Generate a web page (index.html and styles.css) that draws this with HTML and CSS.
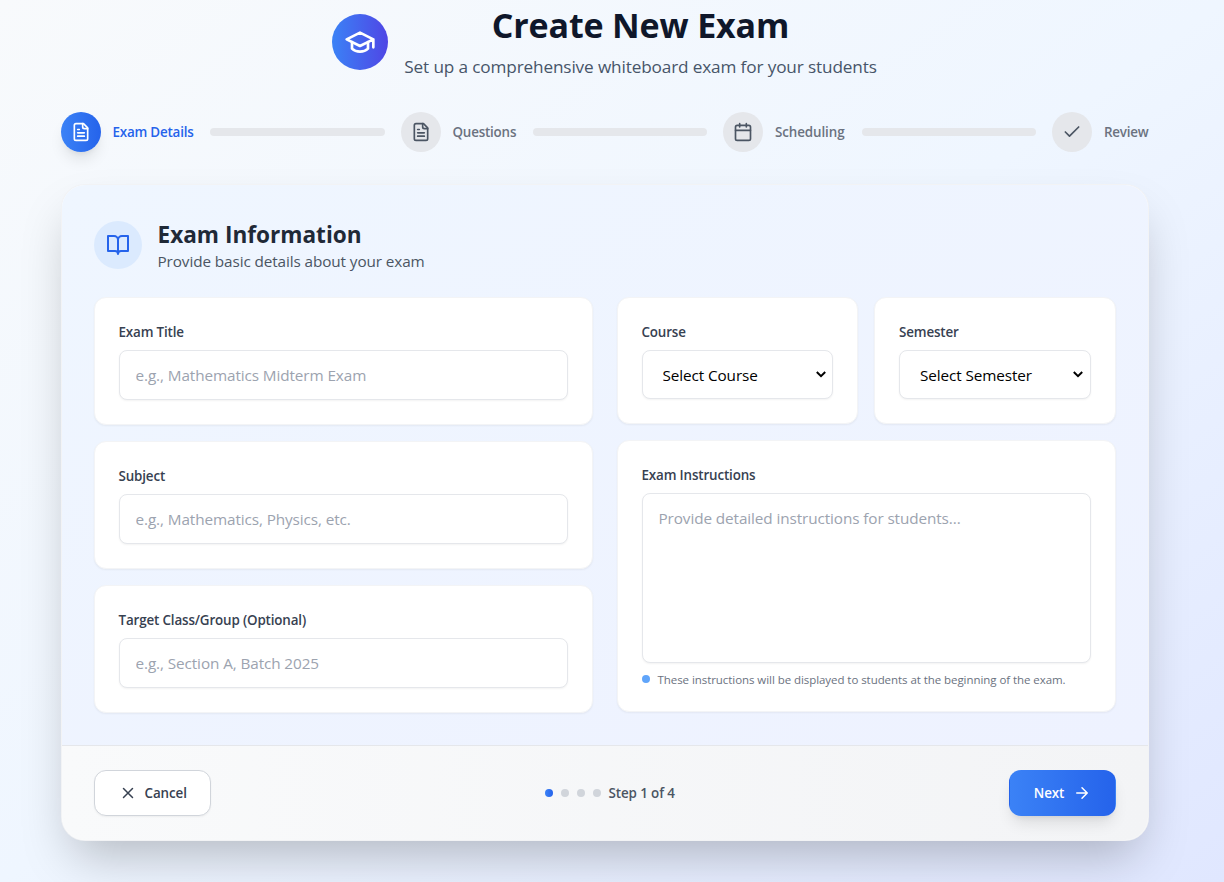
FILE: index.html
```
<!DOCTYPE html>
<html lang="en">
<head>
<meta charset="utf-8">
<title>Create New Exam</title>
<link rel="stylesheet" href="styles.css">
</head>
<body>
<main class="page">
  <header class="hero">
    <div class="hero-icon">
      <svg class="icon i32" viewBox="0 0 24 24"><path d="M22 10v6M2 10l10-5 10 5-10 5z"/><path d="M6 12v5c3 3 9 3 12 0v-5"/></svg>
    </div>
    <div class="hero-text">
      <h1>Create New Exam</h1>
      <p>Set up a comprehensive whiteboard exam for your students</p>
    </div>
  </header>

  <nav class="steps">
    <div class="step active">
      <span class="step-icon"><svg class="icon i20" viewBox="0 0 24 24"><path d="M15 2H6a2 2 0 0 0-2 2v16a2 2 0 0 0 2 2h12a2 2 0 0 0 2-2V7Z"/><path d="M14 2v4a2 2 0 0 0 2 2h4M10 9H8M16 13H8M16 17H8"/></svg></span>
      <span class="step-label w-details">Exam Details</span>
    </div>
    <div class="bar"></div>
    <div class="step">
      <span class="step-icon"><svg class="icon i20" viewBox="0 0 24 24"><path d="M15 2H6a2 2 0 0 0-2 2v16a2 2 0 0 0 2 2h12a2 2 0 0 0 2-2V7Z"/><path d="M14 2v4a2 2 0 0 0 2 2h4M10 9H8M16 13H8M16 17H8"/></svg></span>
      <span class="step-label w-questions">Questions</span>
    </div>
    <div class="bar"></div>
    <div class="step">
      <span class="step-icon"><svg class="icon i20" viewBox="0 0 24 24"><path d="M8 2v4M16 2v4M3 10h18"/><rect x="3" y="4" width="18" height="18" rx="2"/></svg></span>
      <span class="step-label w-scheduling">Scheduling</span>
    </div>
    <div class="bar"></div>
    <div class="step">
      <span class="step-icon"><svg class="icon i20" viewBox="0 0 24 24"><path d="M20 6 9 17l-5-5"/></svg></span>
      <span class="step-label w-review">Review</span>
    </div>
  </nav>

  <section class="card">
    <div class="card-body">
      <div class="section-head">
        <div class="section-icon"><svg class="icon i24" viewBox="0 0 24 24"><path d="M2 3h6a4 4 0 0 1 4 4v14a3 3 0 0 0-3-3H2zM22 3h-6a4 4 0 0 0-4 4v14a3 3 0 0 1 3-3h7z"/></svg></div>
        <div>
          <h2>Exam Information</h2>
          <p>Provide basic details about your exam</p>
        </div>
      </div>
      <div class="columns">
        <div class="column">
          <div class="field"><label for="title">Exam Title</label><input id="title" class="control" placeholder="e.g., Mathematics Midterm Exam"></div>
          <div class="field"><label for="subject">Subject</label><input id="subject" class="control" placeholder="e.g., Mathematics, Physics, etc."></div>
          <div class="field"><label for="group">Target Class/Group (Optional)</label><input id="group" class="control" placeholder="e.g., Section A, Batch 2025"></div>
        </div>
        <div class="column">
          <div class="pair">
            <div class="field">
              <label for="course">Course</label>
              <div class="select"><select id="course" class="control"><option>Select Course</option></select><svg class="chevron" viewBox="0 0 10 7"><path d="M.8 1 5 5.2 9.2 1"/></svg></div>
            </div>
            <div class="field">
              <label for="semester">Semester</label>
              <div class="select"><select id="semester" class="control"><option>Select Semester</option></select><svg class="chevron" viewBox="0 0 10 7"><path d="M.8 1 5 5.2 9.2 1"/></svg></div>
            </div>
          </div>
          <div class="field">
            <label for="notes">Exam Instructions</label>
            <textarea id="notes" class="control" placeholder="Provide detailed instructions for students..."></textarea>
            <p class="hint"><i class="hint-dot"></i><span>These instructions will be displayed to students at the beginning of the exam.</span></p>
          </div>
        </div>
      </div>
    </div>
    <footer class="card-foot">
      <button class="btn cancel"><svg class="icon i18" viewBox="0 0 24 24"><path d="M18 6 6 18M6 6l12 12"/></svg><span>Cancel</span></button>
      <div class="progress"><i class="dot on"></i><i class="dot"></i><i class="dot"></i><i class="dot"></i><span>Step 1 of 4</span></div>
      <button class="btn next"><span>Next</span><svg class="icon i18" viewBox="0 0 24 24"><path d="M5 12h14M12 5l7 7-7 7"/></svg></button>
    </footer>
  </section>
</main>
</body>
</html>
```

FILE: styles.css
```
* { box-sizing: border-box; }
html, body { margin: 0; height: 100%; overflow: hidden; }
body {
  font-family: "Open Sans", "Noto Sans", sans-serif;
  font-size: 15.3px;
  line-height: 24px;
  letter-spacing: -0.1px;
  color: #1f2937;
  background: linear-gradient(to bottom right, #f8fafc, #eff6ff 50%, #e0e7ff);
}
h1, h2, p { margin: 0; }
.page { width: 1088px; margin-left: 60.5px; padding-top: 4px; }
.icon { display: block; flex: none; fill: none; stroke: currentColor; stroke-width: 2; stroke-linecap: round; stroke-linejoin: round; }
.i18 { width: 18px; height: 18px; }
.i20 { width: 20px; height: 20px; }
.i24 { width: 24px; height: 24px; }
.i32 { width: 32px; height: 32px; }

.hero { display: flex; align-items: center; justify-content: center; gap: 16px; height: 76px; margin-bottom: 32px; }
.hero-icon { display: grid; place-items: center; width: 56px; height: 56px; border-radius: 50%; color: #fff; background: linear-gradient(to right, #3b82f6, #4f46e5); }
.hero-text { width: 473px; text-align: center; white-space: nowrap; }
.hero h1 { margin-bottom: 10px; padding-top: 4px; font-size: 34px; line-height: 36px; font-weight: 700; letter-spacing: -0.15px; color: #0f172a; }
.hero p { font-size: 17.2px; line-height: 28px; letter-spacing: -0.14px; color: #475569; }

.steps { display: flex; align-items: center; margin-bottom: 32px; }
.step { display: flex; align-items: center; gap: 12px; color: #6b7280; }
.step-icon { display: grid; place-items: center; width: 40px; height: 40px; border-radius: 50%; background: #e5e7eb; color: #4b5563; }
.active { color: #2563eb; }
.active .step-icon { color: #fff; background: linear-gradient(to right, #3b82f6, #2563eb); box-shadow: 0 10px 15px -3px rgba(0,0,0,.1), 0 4px 6px -4px rgba(0,0,0,.1); }
.step-label { font-size: 13.4px; line-height: 20px; font-weight: 600; letter-spacing: -0.2px; white-space: nowrap; }
.w-details { width: 81.5px; }
.w-questions { width: 64px; }
.w-scheduling { width: 70.5px; letter-spacing: -0.1px; }
.w-review { width: 44.5px; }
.bar { flex: 1; height: 8px; margin: 0 16px; border-radius: 4px; background: #e5e7eb; }

.card { overflow: hidden; border: 1px solid rgba(229,231,235,.5); border-radius: 24px; background: #fff; box-shadow: 0 25px 50px -12px rgba(0,0,0,.25); }
.card-body { padding: 32px; background: linear-gradient(to bottom right, #eff6ff, #eef2ff); }
.section-head { display: flex; align-items: center; gap: 16px; height: 56px; margin-bottom: 24px; }
.section-icon { display: grid; place-items: center; width: 48px; height: 48px; border-radius: 50%; color: #2563eb; background: #dbeafe; }
.section-head h2 { padding-top: 4px; font-size: 22.6px; line-height: 28px; font-weight: 700; letter-spacing: 0; color: #1f2937; }
.section-head p { color: #4b5563; }
.columns { display: grid; grid-template-columns: 1fr 1fr; gap: 24px; }
.column { display: flex; flex-direction: column; gap: 16px; }
.pair { display: grid; grid-template-columns: 1fr 1fr; gap: 16px; }
.field { padding: 24px; border: 1px solid #f3f4f6; border-radius: 12px; background: #fff; box-shadow: 0 1px 2px rgba(0,0,0,.05); }
.field label { display: block; margin-bottom: 8px; font-size: 13.4px; line-height: 20px; font-weight: 600; letter-spacing: -0.15px; color: #374151; }
.control { display: block; width: 100%; height: 50px; padding: 12px 16px; border: 1px solid #e5e7eb; border-radius: 8px; outline: 0; background: #fff; font: inherit; letter-spacing: -0.1px; color: #000; box-shadow: 0 1px 2px rgba(0,0,0,.05); }
.control::placeholder { color: #9ca3af; opacity: 1; }
.select { position: relative; }
select.control { height: 49px; padding-left: 20px; appearance: none; }
.chevron { position: absolute; right: 7.5px; top: 21px; width: 10px; height: 7px; fill: none; stroke: #000; stroke-width: 2; pointer-events: none; }
textarea.control { height: 170px; resize: none; }
.hint { display: flex; align-items: center; margin-top: 8px; font-size: 11.5px; line-height: 16px; letter-spacing: -0.06px; white-space: nowrap; color: #6b7280; }
.hint span { margin: 1px 0 -1px; }
.hint-dot { width: 8px; height: 8px; margin-right: 8px; border-radius: 50%; background: #60a5fa; }

.card-foot { display: flex; align-items: center; justify-content: space-between; padding: 24px 32px; border-top: 1px solid #e5e7eb; background: linear-gradient(to right, #f9fafb, #f3f4f6); }
.btn { display: flex; align-items: center; gap: 8px; height: 46px; padding: 0 24px; border: 1px solid transparent; border-radius: 12px; font: 600 13.4px/20px "Open Sans", "Noto Sans", sans-serif; letter-spacing: -0.1px; white-space: nowrap; }
.cancel { width: 117px; border-color: #d1d5db; color: #374151; background: #fff; box-shadow: 0 1px 2px rgba(0,0,0,.05); }
.next { width: 107px; color: #fff; background: linear-gradient(to right, #3b82f6, #2563eb); box-shadow: 0 10px 15px -3px rgba(0,0,0,.1), 0 4px 6px -4px rgba(0,0,0,.1); }
.next span { width: 31px; }
.progress { display: flex; align-items: center; gap: 8px; width: 130px; font-size: 13.4px; line-height: 20px; font-weight: 600; letter-spacing: -0.1px; white-space: nowrap; color: #4b5563; }
.dot { flex: none; width: 8px; height: 8px; border-radius: 50%; background: #d1d5db; }
.on { background: linear-gradient(to right, #3b82f6, #2563eb); }
```
